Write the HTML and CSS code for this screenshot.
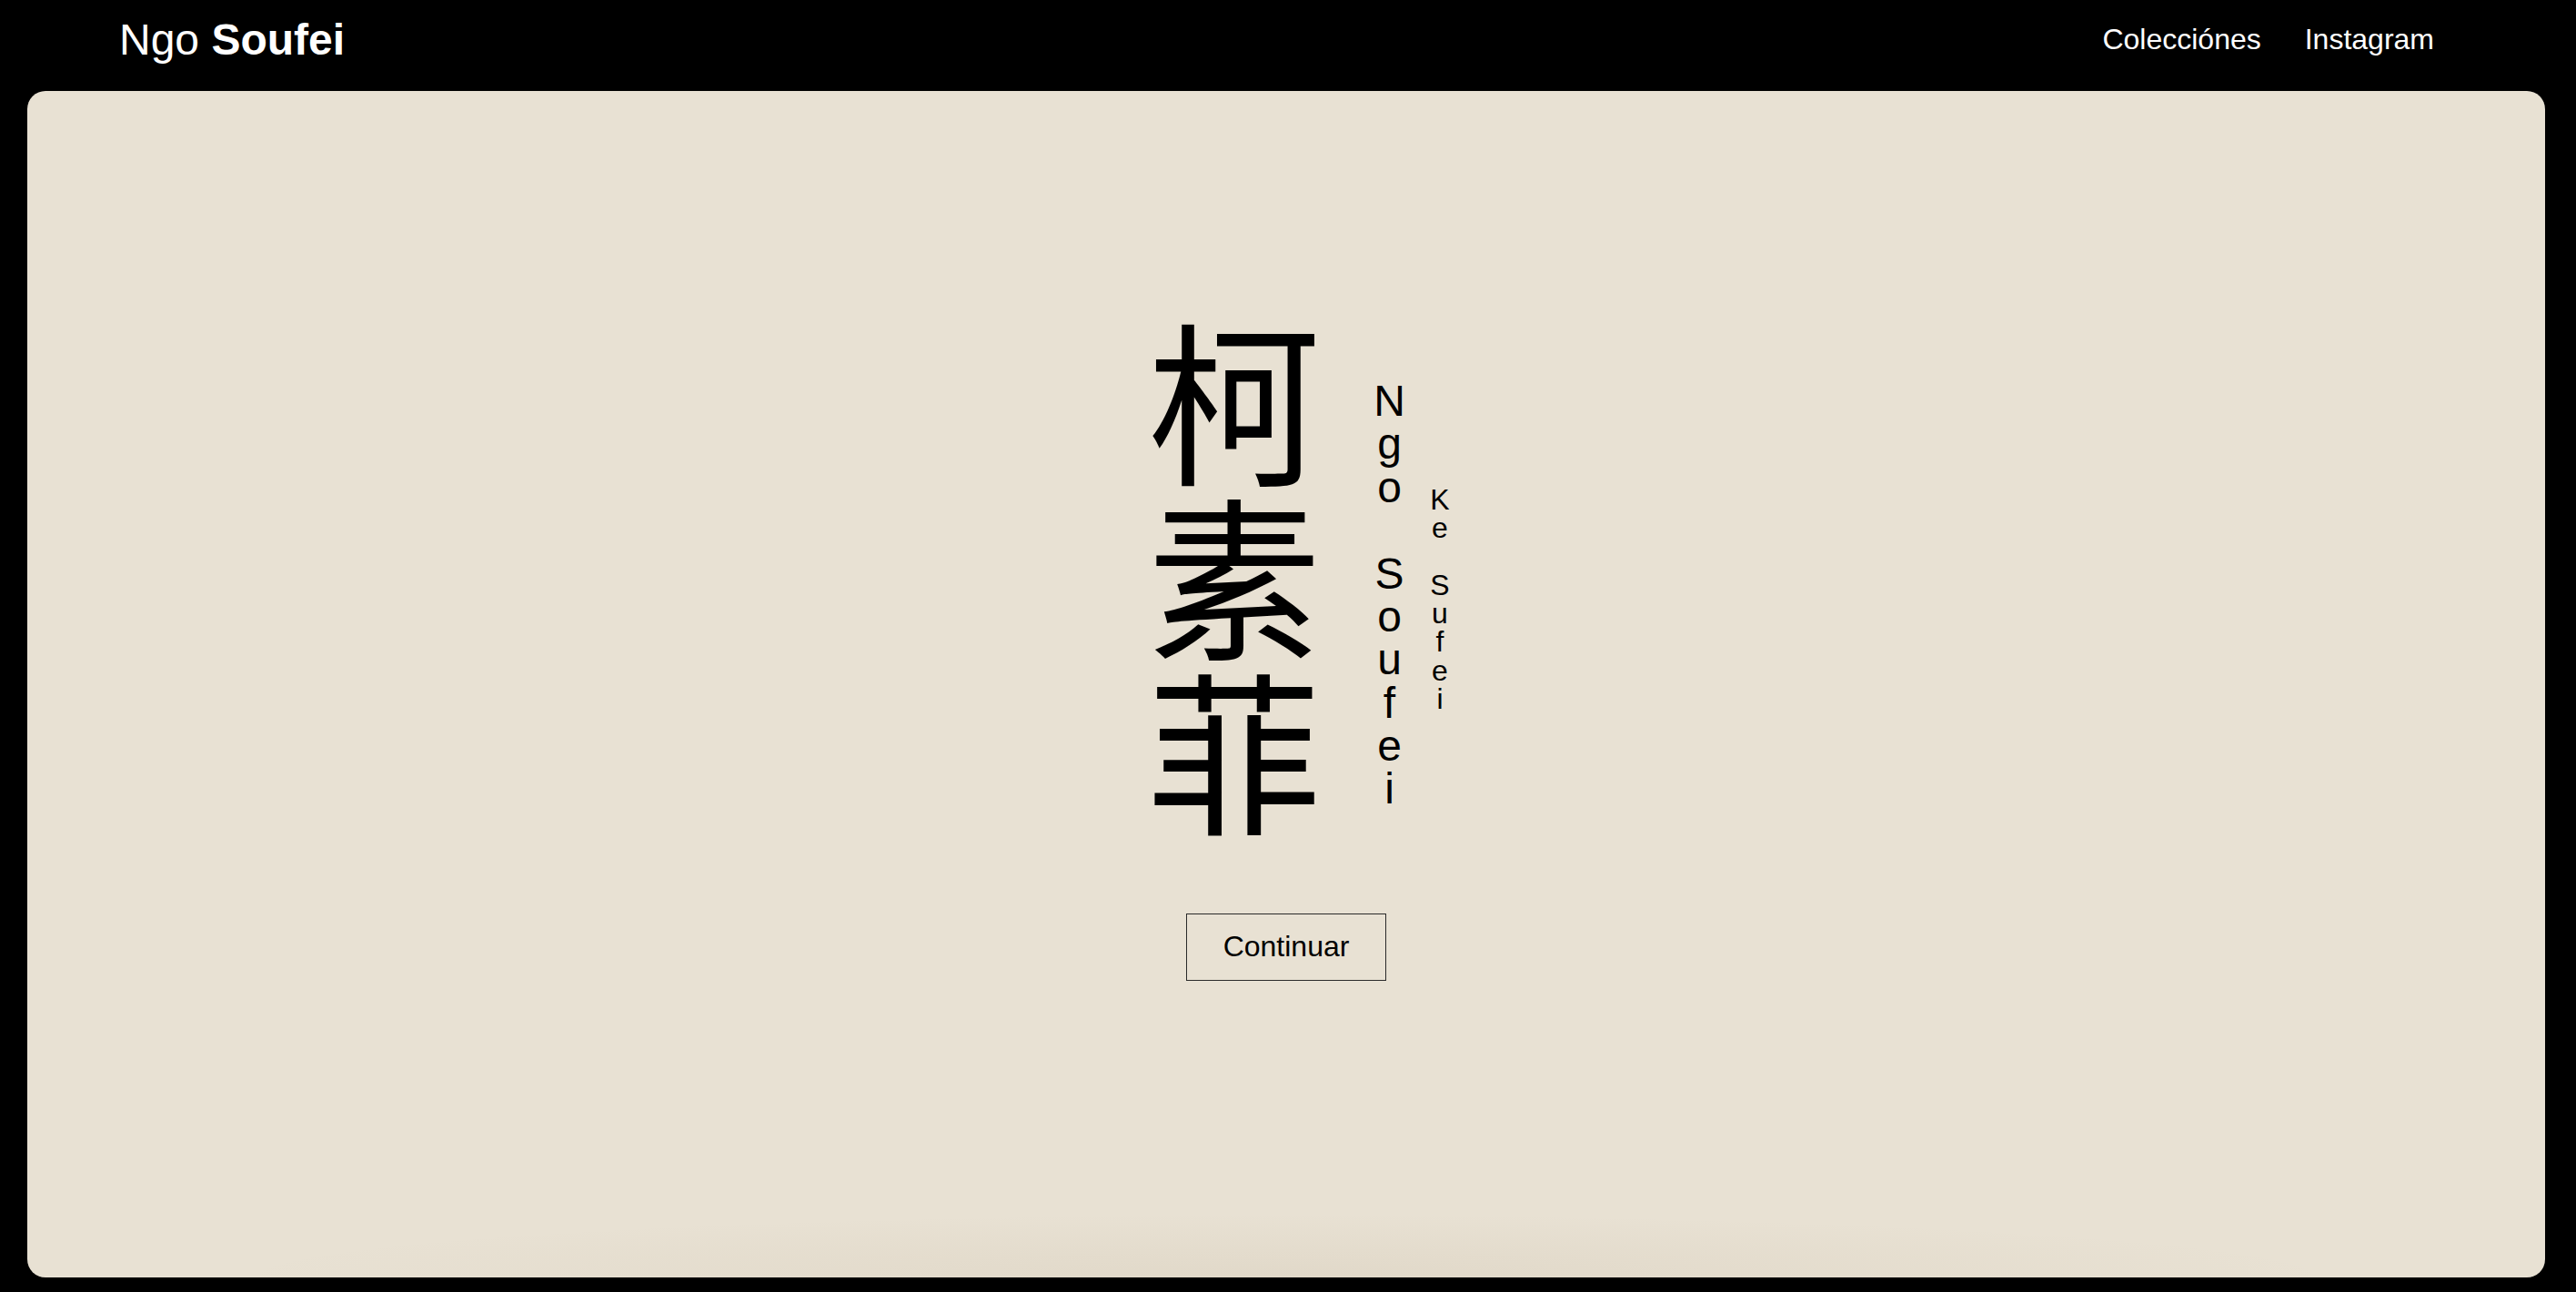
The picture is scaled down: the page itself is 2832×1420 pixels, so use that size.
FILE: index.html
```html
<!DOCTYPE html>
<html lang="es">
<head>
<meta charset="utf-8">
<title>Ngo Soufei</title>
<link rel="stylesheet" href="styles.css">
</head>
<body>
<header class="site-header">
  <a class="logo" href="#"><span class="logo-light">Ngo</span> <strong class="logo-bold">Soufei</strong></a>
  <nav class="nav">
    <a class="nav-link" href="#">Colecciónes</a>
    <a class="nav-link" href="#">Instagram</a>
  </nav>
</header>
<main class="page">
  <section class="hero">
    <div class="name-group">
      <h1 class="name-cjk" lang="zh-Hans">柯素菲</h1>
      <p class="name-latin">Ngo Soufei</p>
      <p class="name-alt">Ke Sufei</p>
    </div>
    <button class="btn" type="button">Continuar</button>
  </section>
</main>
</body>
</html>
```

FILE: styles.css
```css
* {
  box-sizing: border-box;
}

html,
body {
  margin: 0;
  height: 100%;
}

body {
  background: #000;
  font-family: "Liberation Sans", Arial, Helvetica, sans-serif;
  display: flex;
  flex-direction: column;
}

.site-header {
  flex: none;
  height: 86px;
  display: flex;
  align-items: center;
  justify-content: space-between;
  padding: 0 156px 0 131px;
  color: #fff;
}

.logo {
  color: #fff;
  text-decoration: none;
  font-size: 48px;
  line-height: normal;
}

.logo-bold {
  font-weight: 700;
}

.nav {
  display: flex;
  gap: 48px;
}

.nav-link {
  color: #fff;
  text-decoration: none;
  font-size: 32px;
}

.page {
  flex: 1;
  display: flex;
  padding: 14px 34px 16px 30px;
}

.hero {
  flex: 1;
  display: flex;
  flex-direction: column;
  align-items: center;
  padding-top: 246px;
  border-radius: 20px;
  background-color: #e8e1d3;
  background-image: radial-gradient(ellipse 42% 70px at 50% 100%, rgba(140, 115, 80, 0.08), rgba(140, 115, 80, 0));
  color: #000;
}

.name-group {
  display: flex;
  align-items: flex-start;
  margin-left: 32px;
}

.name-cjk {
  margin: 4px 0 0;
  writing-mode: vertical-rl;
  font-family: "Noto Sans CJK SC", "Noto Sans CJK JP", sans-serif;
  font-size: 192px;
  font-weight: 400;
  line-height: 1;
}

.name-latin,
.name-alt {
  margin: 0;
  writing-mode: vertical-rl;
  text-orientation: upright;
  line-height: 1;
  letter-spacing: -0.117em;
}

.name-latin {
  margin: 68px 0 0 50px;
  font-size: 48px;
}

.name-alt {
  margin: 185px 0 0 16px;
  font-size: 32px;
  letter-spacing: -0.148em;
}

.btn {
  margin-top: 78px;
  padding: 17px 40px 18px;
  border: 1px solid #2a2a2a;
  background: transparent;
  color: #000;
  font-family: inherit;
  font-size: 32px;
  line-height: normal;
}
```
